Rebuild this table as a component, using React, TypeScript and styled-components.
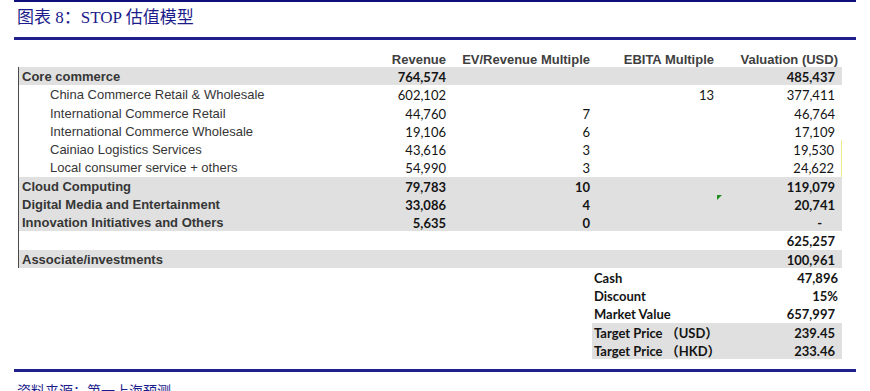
import React from 'react';
import styled, { createGlobalStyle } from 'styled-components';

const GlobalStyle = createGlobalStyle`
  html, body { margin: 0; padding: 0; background: #ffffff; }
  body { width: 870px; height: 391px; overflow: hidden; }
`;

const NAVY = '#1c1c8c';

const Page = styled.div`
  width: 842px;
  margin-left: 14px;
`;

const TopRule = styled.div`
  height: 2px;
  background: #0e0e7c;
`;

const Title = styled.h1`
  margin: 0;
  height: 38px;
  box-sizing: border-box;
  padding: 5px 0 0 3px;
  font-family: "Liberation Serif", "Noto Sans CJK SC", serif;
  font-size: 17px;
  line-height: 21px;
  font-weight: normal;
  color: ${NAVY};
  border-bottom: 3px solid #20208f;
`;

const Table = styled.div`
  margin: 11px 0 0 4px;
  width: 824px;
`;

const COLS = '362px 68px 144px 124px 126px';

const HeaderRow = styled.div`
  display: grid;
  grid-template-columns: ${COLS};
  height: 16px;
  align-items: end;
`;

const HeaderCell = styled.div<{ $pad?: number }>`
  font-family: "Liberation Sans", Arial, sans-serif;
  font-weight: bold;
  font-size: 13px;
  line-height: 15px;
  color: #404040;
  text-align: right;
  white-space: nowrap;
  padding-right: ${p => p.$pad ?? 2}px;
`;

const Row = styled.div<{ $shade?: boolean }>`
  display: grid;
  grid-template-columns: ${COLS};
  height: 18.25px;
  align-items: stretch;
  background: ${p => (p.$shade ? '#e0e0e0' : 'transparent')};
`;

const Label = styled.div<{ $bold?: boolean; $sub?: boolean }>`
  font-family: "Liberation Sans", Arial, sans-serif;
  font-size: 13px;
  line-height: 16px;
  padding-top: 2px;
  font-weight: ${p => (p.$bold ? 'bold' : 'normal')};
  color: #363636;
  border-left: 1px solid #4a4a4a;
  padding-left: ${p => (p.$sub ? 31 : 3)}px;
  white-space: nowrap;
`;

const Num = styled.div<{ $bold?: boolean; $pad?: number; $edge?: boolean; $flag?: boolean }>`
  position: relative;
  font-family: Lato, "Open Sans", sans-serif;
  font-size: 13px;
  line-height: 16px;
  padding-top: 2px;
  font-weight: ${p => (p.$bold ? 700 : 400)};
  color: #141414;
  text-align: right;
  padding-right: ${p => p.$pad ?? 2}px;
  white-space: nowrap;
  border-right: ${p => (p.$edge ? '1px solid #f3e98c' : 'none')};
  &::before {
    content: '';
    display: ${p => (p.$flag ? 'block' : 'none')};
    position: absolute;
    left: 1px;
    top: 0;
    width: 0;
    height: 0;
    border-top: 5px solid #1f8f1f;
    border-right: 5px solid transparent;
  }
`;

const SumLabel = styled.div<{ $shade?: boolean }>`
  grid-column: 4;
  font-family: Lato, "Noto Sans CJK SC", sans-serif;
  font-size: 13px;
  line-height: 16px;
  padding-top: 2px;
  font-weight: 700;
  color: #141414;
  padding-left: 2px;
  white-space: nowrap;
  background: ${p => (p.$shade ? '#e0e0e0' : 'transparent')};
`;

const SumValue = styled(Num)<{ $shade?: boolean }>`
  grid-column: 5;
  background: ${p => (p.$shade ? '#e0e0e0' : 'transparent')};
`;

const BottomRule = styled.div`
  margin-top: 10px;
  height: 3px;
  background: #20208f;
`;

const Footer = styled.div`
  margin-top: 9px;
  padding-left: 3px;
  font-family: "Noto Sans CJK SC", sans-serif;
  font-size: 14px;
  line-height: 18px;
  color: ${NAVY};
`;

type Seg = {
  label: string;
  bold?: boolean;
  sub?: boolean;
  shade?: boolean;
  rev?: string;
  ev?: string;
  ebita?: string;
  val?: string;
  valPad?: number;
  edge?: boolean;
  flag?: boolean;
};

const segments: Seg[] = [
  { label: 'Core commerce', bold: true, shade: true, rev: '764,574', val: '485,437' },
  { label: 'China Commerce Retail & Wholesale', sub: true, rev: '602,102', ebita: '13', val: '377,411' },
  { label: 'International Commerce Retail', sub: true, rev: '44,760', ev: '7', val: '46,764' },
  { label: 'International Commerce Wholesale', sub: true, rev: '19,106', ev: '6', val: '17,109' },
  { label: 'Cainiao Logistics Services', sub: true, rev: '43,616', ev: '3', val: '19,530', edge: true },
  { label: 'Local consumer service + others', sub: true, rev: '54,990', ev: '3', val: '24,622', edge: true },
  { label: 'Cloud Computing', bold: true, shade: true, rev: '79,783', ev: '10', val: '119,079' },
  { label: 'Digital Media and Entertainment', bold: true, shade: true, rev: '33,086', ev: '4', val: '20,741', flag: true },
  { label: 'Innovation Initiatives and Others', bold: true, shade: true, rev: '5,635', ev: '0', val: '-', valPad: 20 },
  { label: '', bold: true, val: '625,257' },
  { label: 'Associate/investments', bold: true, shade: true, val: '100,961' },
];

type Sum = { label: string; value: string; pad?: number; shade?: boolean };

const summary: Sum[] = [
  { label: 'Cash', value: '47,896', pad: 4 },
  { label: 'Discount', value: '15%', pad: 4 },
  { label: 'Market Value', value: '657,997', pad: 7 },
  { label: 'Target Price （USD）', value: '239.45', pad: 7, shade: true },
  { label: 'Target Price （HKD）', value: '233.46', pad: 7, shade: true },
];

export default function App() {
  return (
    <>
      <GlobalStyle />
      <Page>
        <TopRule />
        <Title>图表 8：STOP 估值模型</Title>
        <Table>
          <HeaderRow>
            <div />
            <HeaderCell>Revenue</HeaderCell>
            <HeaderCell>EV/Revenue Multiple</HeaderCell>
            <HeaderCell>EBITA Multiple</HeaderCell>
            <HeaderCell $pad={4}>Valuation (USD)</HeaderCell>
          </HeaderRow>
          {segments.map((s, i) => (
            <Row key={i} $shade={s.shade}>
              <Label $bold={s.bold} $sub={s.sub}>{s.label}</Label>
              <Num $bold={s.bold}>{s.rev}</Num>
              <Num $bold={s.bold}>{s.ev}</Num>
              <Num $bold={s.bold}>{s.ebita}</Num>
              <Num $bold={s.bold} $pad={s.valPad ?? 7} $edge={s.edge} $flag={s.flag}>
                {s.val}
              </Num>
            </Row>
          ))}
          {summary.map((r, i) => (
            <Row key={`s${i}`}>
              <SumLabel $shade={r.shade}>{r.label}</SumLabel>
              <SumValue $bold $pad={r.pad} $shade={r.shade}>{r.value}</SumValue>
            </Row>
          ))}
        </Table>
        <BottomRule />
        <Footer>资料来源：第一上海预测</Footer>
      </Page>
    </>
  );
}
